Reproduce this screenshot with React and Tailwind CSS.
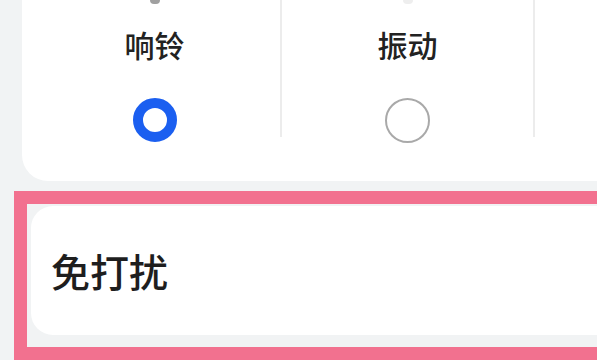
import React from 'react';

// Sound mode options shown in the top card
const modes = [
  { label: '响铃', checked: true },
  { label: '振动', checked: false },
];

export default function App() {
  return (
    <div
      className="w-[597px] h-[360px] overflow-hidden bg-[#f1f3f4] flex flex-col"
      style={{ fontFamily: '"Noto Sans CJK SC", "Noto Sans", sans-serif' }}
    >
      {/* Sound mode card */}
      <div className="ml-[22px] h-[181px] shrink-0 bg-white rounded-bl-[26px] flex pl-[7px]">
        {modes.map((m) => (
          <React.Fragment key={m.label}>
            <div className="w-[251px] shrink-0 flex flex-col items-center">
              {/* bottom of a cut-off icon */}
              <div
                className={`w-[10px] h-[4px] rounded-b-full ${
                  m.checked ? 'bg-[#a0a0a0]' : 'bg-[#eeeeee]'
                }`}
              />
              <div className="mt-[21px] h-[38px] leading-[38px] text-[30px] font-medium text-[#222222]">
                {m.label}
              </div>
              <div className="mt-[35px]">
                {m.checked ? (
                  <div className="w-[44px] h-[44px] rounded-full border-[10px] border-[#1b5ff0] bg-white" />
                ) : (
                  <div className="w-[45px] h-[45px] rounded-full border-2 border-[#a9a9a9] bg-white" />
                )}
              </div>
            </div>
            <div className="w-[2px] h-[137px] shrink-0 bg-[#ececec]" />
          </React.Fragment>
        ))}
      </div>

      {/* Do not disturb, highlighted */}
      <div className="ml-[14px] mt-[10px] w-[640px] h-[169px] shrink-0 border-[13px] border-[#f2718f] bg-[#f1f3f4] pt-[2px] pl-[4px]">
        <div className="h-[129px] bg-white rounded-[22px] flex items-center pl-[20px]">
          <span className="text-[39px] font-medium text-[#1e1e1e] leading-none">免打扰</span>
        </div>
      </div>
    </div>
  );
}
